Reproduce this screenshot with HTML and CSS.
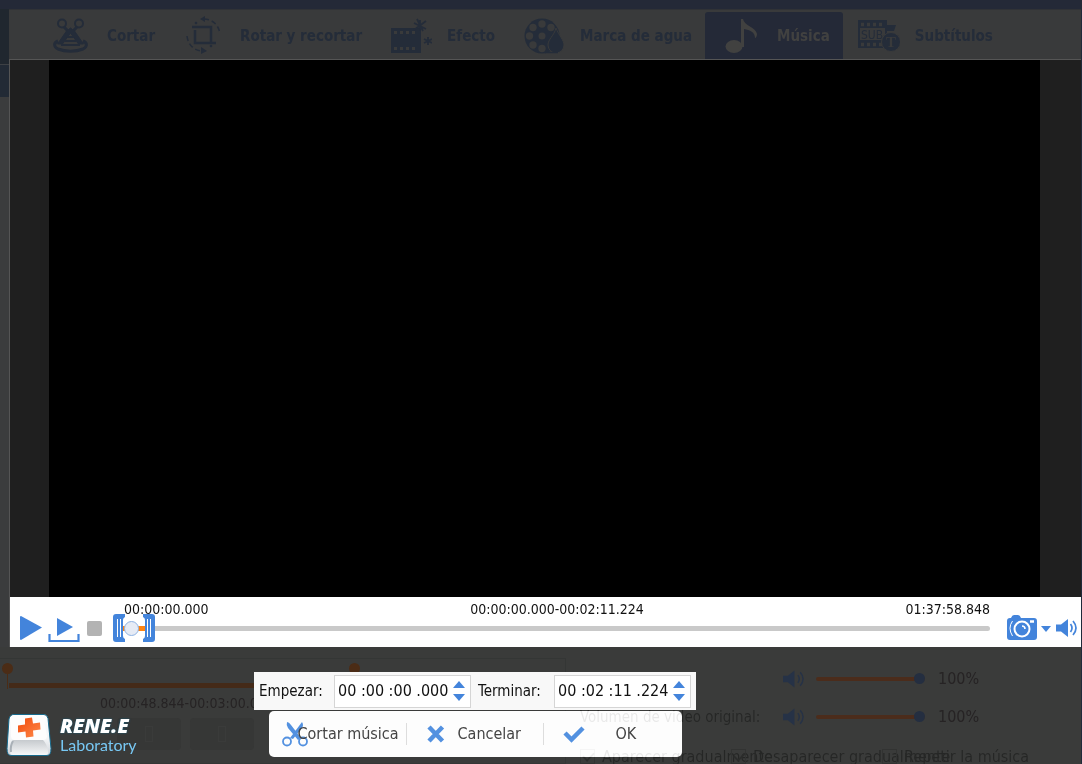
FILE: index.html
```html
<!DOCTYPE html>
<html lang="es">
<head>
<meta charset="utf-8">
<title>Cortar música</title>
<link rel="stylesheet" href="styles.css">
</head>
<body>
<div class="titlebar"></div>
<main class="workspace">
  <aside class="rail"><div class="rail-top"></div><div class="rail-item"></div></aside>
  <section class="editor">
    <nav class="tabs">
      <button class="tab"><svg class="tab-icon" viewBox="0 0 42 40" fill="none" stroke="currentColor"><g stroke-width="2"><circle cx="12" cy="7.500" r="4"/><circle cx="29" cy="7.500" r="4"/><path d="M14 11l5 5M27 11l-5 5" stroke-width="3"/></g><path d="M8 25c-5 2-4 6 0 8 7 3 18 3 25 0 4-2 5-6 0-8" stroke-width="3"/><path d="M20.500 12l4 3 9 13h-5l-8-11-8 11h-5l9-13z" fill="currentColor"/><path d="M17 21h7M15 25h11M11 29h19" stroke-width="2"/></svg>Cortar</button>
      <button class="tab"><svg class="tab-icon" viewBox="0 0 42 40" fill="none" stroke="currentColor"><path d="M9 11h19v15M12 14v13h21" stroke-width="2.500"/><path d="M21 3c8 0 15 6 16 15M4 20c1 9 7 14 14 15" stroke-width="1.500" stroke-dasharray="5 3"/><path d="M22 0v6l-5-3zM18 31v7l6-3z" fill="currentColor" stroke="none"/><circle cx="13" cy="7" r="1.300" fill="currentColor" stroke="none"/><circle cx="28" cy="30" r="1.300" fill="currentColor" stroke="none"/></svg>Rotar y recortar</button>
      <button class="tab"><svg class="tab-icon" viewBox="0 0 42 40"><path d="M1 12h30v25H1z" fill="currentColor"/><path d="M4 16.500h24M4 32.500h24" class="holes" stroke-width="3" stroke-dasharray="3 3"/><path d="M30 4v11M24 7l12 6M36 5l-12 9M27 3l6 12M38 21v8M34 23l8 4M42 23l-8 4" stroke="currentColor" stroke-width="1.800"/></svg>Efecto</button>
      <button class="tab"><svg class="tab-icon" viewBox="0 0 42 40"><circle cx="19" cy="20" r="17.500" fill="currentColor"/><g class="hole"><circle cx="19" cy="20" r="3.500"/><circle cx="19" cy="8" r="3.700"/><circle cx="10" cy="11.500" r="3.700"/><circle cx="6.500" cy="20" r="3.700"/><circle cx="10" cy="29" r="3.700"/><circle cx="19" cy="32.500" r="3.700"/><circle cx="28" cy="11.500" r="3.700"/></g><path class="drop" d="M33 12c3 8 8 12 8 17a8 8 0 0 1-16 0c0-6 6-9 8-17z" fill="currentColor"/><path d="M22 36.500h13" stroke="currentColor" stroke-width="1.500"/></svg>Marca de agua</button>
      <button class="tab active"><svg class="tab-icon" viewBox="0 0 42 40" fill="currentColor"><ellipse cx="14" cy="30.500" rx="8.500" ry="6.500"/><path d="M21 3h2c1 7 13 8 14 15 0 2-1 4-2 4 0-6-5-8-11-9v18h-3z"/></svg>Música</button>
      <button class="tab"><svg class="tab-icon" viewBox="0 0 42 40"><path d="M0 4h29v28H0z" fill="currentColor"/><path class="holes" d="M3 8.500h24M3 28.500h24" stroke-width="3.500" stroke-dasharray="3 3"/><path class="hole" d="M2 12h25v12H2z"/><text class="sub-text" x="3" y="22.500">SUB</text><path d="M29 9h9l-2 6h-7z" fill="currentColor"/><circle class="drop" cx="33" cy="26" r="9.500" fill="currentColor"/><text class="t-text" x="28" y="31">T</text></svg>Subtítulos</button>
    </nav>
    <div class="video"><div class="frame"></div></div>
    <div class="player">
      <button class="icon-btn" aria-label="Reproducir"><svg width="24" height="26" viewBox="0 0 24 26"><path d="M2 1l21 11.500L2 25q-1 0-1-1V2q0-1 1-1z" fill="currentColor"/></svg></button>
      <button class="icon-btn" aria-label="Reproducir selección"><svg width="32" height="27" viewBox="0 0 32 27"><path d="M9 3l16 9L9 21z" fill="currentColor"/><path d="M1.500 19v7h29v-7" fill="none" stroke="currentColor" stroke-width="2.200"/></svg></button>
      <button class="icon-btn stop" aria-label="Detener"></button>
      <div class="seek">
        <div class="times"><span>00:00:00.000</span><span>00:00:00.000-00:02:11.224</span><span>01:37:58.848</span></div>
        <div class="seek-track">
          <input type="range" min="0" max="5878" value="78" aria-label="Posición">
          <svg class="handle handle-start" width="13" height="28" viewBox="0 0 13 28"><path d="M3 0h9v3q-2 1-2 3v16q0 2 2 3v3H3q-3 0-3-3V3q0-3 3-3z" fill="currentColor"/><path d="M4.500 5v18M7.500 5v18" stroke="#fff"/></svg>
          <svg class="handle handle-end" width="13" height="28" viewBox="0 0 13 28"><path d="M10 0H1v3q2 1 2 3v16q0 2-2 3v3h9q3 0 3-3V3q0-3-3-3z" fill="currentColor"/><path d="M5.500 5v18M8.500 5v18" stroke="#fff"/></svg>
        </div>
      </div>
      <div class="player-tools">
        <button class="icon-btn" aria-label="Captura"><svg width="30" height="26" viewBox="0 0 30 26"><path d="M3 3h1q1-3 3-3h4q2 0 3 3h13q3 0 3 3v16q0 3-3 3H3q-3 0-3-3V6q0-3 3-3z" fill="currentColor"/><circle cx="15" cy="14" r="7.500" fill="none" stroke="#fff" stroke-width="2"/><path d="M15 11q3 0 3 3" stroke="#fff" stroke-width="1.500" fill="none"/><path d="M23 6.500h4" stroke="#fff" stroke-width="2.500"/><path d="M5.500 6q-5 7 0 15" stroke="#fff" fill="none"/></svg></button>
        <button class="icon-btn" aria-label="Opciones de captura"><svg width="12" height="8" viewBox="0 0 12 8"><path d="M1 2h10L6 8z" fill="currentColor"/></svg></button>
        <button class="icon-btn" aria-label="Volumen"><svg width="23" height="18" viewBox="0 0 23 18"><path d="M1 5.500h5L13 0v18l-7-5.500H1z" fill="currentColor"/><path d="M15.500 5q3 4 0 8M18 2q6 7 0 14" fill="none" stroke="currentColor" stroke-width="1.700"/></svg></button>
      </div>
    </div>
  </section>
</main>
<section class="panel">
  <div class="clip">
    <div class="clip-track"><i class="pin"></i><i class="pin pin-end"></i></div>
    <div class="clip-time">00:00:48.844-00:03:00.000</div>
    <div class="clip-buttons"><button aria-label="Marcar inicio"><i></i></button><button aria-label="Marcar fin"><i></i></button></div>
  </div>
  <div class="audio">
    <div class="volume">
      <span class="volume-name"></span>
      <svg width="22" height="18" viewBox="0 0 23 18"><path d="M0 5.500h5L12 0v18l-7-5.500H0z" fill="currentColor"/><path d="M15.500 5q3 4 0 8M18 2q6 7 0 14" fill="none" stroke="currentColor" stroke-width="1.500"/></svg>
      <input type="range" value="100" aria-label="Volumen de la música"><output>100%</output>
    </div>
    <div class="volume">
      <label class="volume-name ghost" for="orig">Volumen de video original:</label>
      <svg width="22" height="18" viewBox="0 0 23 18"><path d="M0 5.500h5L12 0v18l-7-5.500H0z" fill="currentColor"/><path d="M15.500 5q3 4 0 8M18 2q6 7 0 14" fill="none" stroke="currentColor" stroke-width="1.500"/></svg>
      <input type="range" value="100" id="orig"><output>100%</output>
    </div>
    <div class="options ghost">
      <label><input type="checkbox" checked>Aparecer gradualmente</label>
      <label><input type="checkbox" checked>Desaparecer gradualmente</label>
      <label><input type="checkbox">Repetir la música</label>
    </div>
  </div>
</section>
<div class="dialog">
  <div class="range-row">
    <label for="start">Empezar:</label>
    <div class="spin"><input type="text" id="start" value="00 :00 :00 .000"><div class="spin-buttons"><button aria-label="Aumentar inicio"><svg width="12" height="7" viewBox="0 0 12 7"><path d="M0 7l6-7 6 7z" fill="currentColor"/></svg></button><button aria-label="Reducir inicio"><svg width="12" height="7" viewBox="0 0 12 7"><path d="M0 0h12L6 7z" fill="currentColor"/></svg></button></div></div>
    <label for="end">Terminar:</label>
    <div class="spin"><input type="text" id="end" value="00 :02 :11 .224"><div class="spin-buttons"><button aria-label="Aumentar fin"><svg width="12" height="7" viewBox="0 0 12 7"><path d="M0 7l6-7 6 7z" fill="currentColor"/></svg></button><button aria-label="Reducir fin"><svg width="12" height="7" viewBox="0 0 12 7"><path d="M0 0h12L6 7z" fill="currentColor"/></svg></button></div></div>
  </div>
  <div class="actions">
    <button class="act-cut"><svg class="scissors" width="26" height="26" viewBox="0 0 26 26"><path d="M5 1q2 0 4 3l10 13-3 2L6 7q-2-3-1-6zM20 1q2 3 0 6l-9 11-3-1 9-12z" fill="currentColor"/><circle cx="5" cy="20.500" r="4" fill="none" stroke="currentColor" stroke-width="1.800"/><circle cx="21" cy="20.500" r="4" fill="none" stroke="currentColor" stroke-width="1.800"/></svg><span>Cortar música</span></button>
    <button class="act-cancel"><svg width="18" height="18" viewBox="0 0 18 18"><path d="M2 2l13.500 14M15.500 2L2 16" stroke="currentColor" stroke-width="4.500"/></svg><span>Cancelar</span></button>
    <button class="act-ok"><svg width="22" height="18" viewBox="0 0 22 18"><path d="M2 8l6.500 6.500L20 3" fill="none" stroke="currentColor" stroke-width="4.500"/></svg><span>OK</span></button>
  </div>
</div>
<div class="logo">
  <svg width="46" height="44" viewBox="0 0 46 44"><defs><linearGradient id="key" x2="0" y2="1"><stop offset="0" stop-color="#fff"/><stop offset=".6" stop-color="#f2f4f6"/><stop offset="1" stop-color="#cfd4da"/></linearGradient><linearGradient id="base" x2="0" y2="1"><stop offset="0" stop-color="#c6cace"/><stop offset="1" stop-color="#f6f7f8"/></linearGradient><linearGradient id="cross" x2="1" y2="1"><stop offset="0" stop-color="#f04a0c"/><stop offset="1" stop-color="#ff8a4a"/></linearGradient></defs><path d="M8 1.500h30q3 0 4 4l3 30q0 7-4 7H5q-4 0-4-7L3 6q1-4.500 5-4.500z" fill="url(#key)" stroke="#176a8c"/><path d="M7 27q-3 5-3 12 0 3 3 3h32q4 0 3-4-1-7-5-11z" fill="url(#base)"/><path d="M9 2q-4 0-4 4v17q0 4 4 4h28q4 0 4-4L38 6q0-4-4-4z" fill="#fdfdfd"/><path d="M7 28q-3 5-2 11" fill="none" stroke="#a9b0b7" stroke-width="2"/><path d="M19 5.500l7-1 1 6 7-1 .5 7-7.500 1 .5 6-7.500 1-.5-6-7.500 1v-7l7-1z" fill="url(#cross)"/></svg>
  <div class="logo-text"><b>RENE.E</b><span>Laboratory</span></div>
</div>
</body>
</html>
```
FILE: styles.css
```css
* { box-sizing: border-box; }
body {
  margin: 0; min-height: 100vh; display: flex; flex-direction: column; overflow: hidden;
  position: relative; background: #3a3b3a; color: #222;
  font: 15px/18px "DejaVu Sans Condensed", "Noto Sans", sans-serif;
}
button, input { font: inherit; color: inherit; margin: 0; }
button { border: 0; padding: 0; background: none; }
svg { display: block; flex: none; }

.titlebar { height: 9px; background: #242937; }
.workspace { flex: 1; display: flex; border-right: 1px solid #1f2a3a; }
.rail { width: 9px; background: #3b3c3d; }
.rail-top { height: 56px; background: #20272f; border-bottom: 1px solid #3d4044; }
.rail-item { height: 32px; background: #222a35; }
.editor { flex: 1; min-width: 0; display: flex; flex-direction: column; }

.tabs { height: 50px; display: flex; padding: 2px 0 0 26px; background: #393a3b; border-top: 1px solid #303236; }
.tab {
  display: flex; align-items: center; gap: 15px; padding: 0 13px 0 15px;
  color: #242c39; font-weight: bold; white-space: nowrap;
}
.tab-icon { width: 42px; height: 40px; }
.tab.active { background: #242937; color: #414140; border-radius: 3px 3px 0 0; }
.hole { fill: #393a3b; }
.holes { stroke: #393a3b; }
.drop { stroke: #393a3b; stroke-width: 1; }
.sub-text { font-size: 12px; font-weight: normal; fill: #242c39; }
.t-text { font: bold 15px "Liberation Serif", serif; fill: #393a3b; }

.video { flex: 1; display: flex; padding: 0 41px 0 39px; background: #1f1f1f; border-top: 1px solid #555; border-left: 1px solid #555; }
.frame { flex: 1; background: #000; }

.player {
  height: 50px; display: flex; align-items: center; padding: 12px 3px 0 9px;
  background: #fff; border-left: 1px solid #555; color: #4384db;
}
.icon-btn { display: flex; flex: none; color: #4384db; }
.icon-btn + .icon-btn { margin-left: 3px; }
.player > .icon-btn + .icon-btn { margin-left: 5px; }
.player > .icon-btn + .stop { margin-left: 7px; }
.stop { width: 15px; height: 15px; border-radius: 2px; background: #b3b3b3; }
.seek { flex: 1; min-width: 0; margin: -8px 17px 0 11px; align-self: flex-start; }
.times { display: flex; justify-content: space-between; padding-left: 11px; color: #111; font-size: 14px; line-height: 16px; }
.seek-track { position: relative; height: 28px; margin-top: -3px; display: flex; align-items: center; }
input[type="range"] { appearance: none; background: none; }
.seek-track input { width: 100%; height: 15px; }
.seek-track input::-webkit-slider-runnable-track { height: 5px; border-radius: 3px; background: linear-gradient(90deg, #ff8412 32px, #c9c9c9 32px); }
.seek-track input::-webkit-slider-thumb { appearance: none; width: 15px; height: 15px; margin-top: -5px; border: 1px solid #8fb3e3; border-radius: 50%; background: #e6ebf5; }
.handle { position: absolute; top: 0; }
.handle-start { left: 0; }
.handle-end { left: 29px; }
.player-tools { display: flex; align-items: center; }

.panel { display: flex; background: #3a3b3a; border-right: 1px solid #1f2a3a; color: #262324; }
.clip { width: 566px; margin-top: 11px; border: 1px solid #343635; border-left: 0; }
.clip-track { position: relative; height: 5px; margin: 24px 210px 0 9px; background: #442a18; }
.pin { position: absolute; left: -7px; bottom: 14px; width: 11px; height: 11px; border-radius: 50%; background: #4b2c16; }
.pin::after { content: ""; position: absolute; left: 5px; top: 10px; width: 1px; height: 16px; background: #4b2c16; }
.pin-end { left: auto; right: -5px; }
.clip-time { margin: 7px 0 0 100px; font-size: 14px; line-height: 16px; }
.clip-buttons { display: flex; gap: 9px; margin: 7px 0 0 117px; }
.clip-buttons button { width: 64px; height: 32px; border-radius: 4px; background: #363736; display: grid; place-items: center; }
.clip-buttons i { width: 8px; height: 16px; border: 1px solid #3a3b3a; }
.audio { flex: 1; padding: 13px 0 0 14px; }
.volume { height: 38px; display: flex; align-items: center; color: #263246; }
.volume-name { width: 203px; white-space: nowrap; }
.volume input { width: 109px; height: 12px; margin: 0 13px 0 11px; }
.volume input::-webkit-slider-runnable-track { height: 4px; background: #4b2c1b; border-radius: 2px; }
.volume input::-webkit-slider-thumb { appearance: none; width: 11px; height: 11px; margin-top: -4px; border-radius: 50%; background: #242e40; }
.volume output { color: #262324; font-size: 16px; }
.ghost { position: relative; z-index: 2; color: #151515; mix-blend-mode: difference; }
.options { display: grid; grid-template-columns: 151px 151px 1fr; align-items: end; height: 28px; font-size: 16px; line-height: 14px; white-space: nowrap; }
.options label { display: flex; align-items: center; gap: 7px; min-width: 0; }
.options input { appearance: none; flex: none; width: 15px; height: 15px; border: 1px solid #080808; }
.options input:checked::before { content: ""; display: block; width: 9px; height: 5px; margin: 2px; border: solid #101010; border-width: 0 0 2px 2px; rotate: -45deg; }

.dialog { position: absolute; z-index: 1; left: 254px; bottom: 7px; display: flex; flex-direction: column; align-items: center; gap: 1px; }
.range-row { display: flex; align-items: center; height: 38px; padding: 0 5px; background: #f8f8f8; color: #111; }
.range-row label { width: 75px; white-space: nowrap; }
.spin + label { width: 83px; padding-left: 7px; }
.spin { width: 137px; height: 33px; display: flex; align-items: center; background: #fff; border: 1px solid #d5d5d5; padding: 0 5px 0 3px; }
.spin input { flex: 1; min-width: 0; border: 0; padding: 0; background: none; outline: 0; font-size: 16px; }
.spin-buttons { display: grid; gap: 6px; }
.spin-buttons button { color: #4384db; }
.actions { display: flex; align-items: center; width: 413px; height: 46px; border-radius: 5px; background: #fdfdfd; color: #444; font-size: 16px; }
.actions button { display: flex; align-items: center; height: 22px; white-space: nowrap; }
.actions svg { color: #5391e0; }
.actions .act-cut { width: 138px; padding-left: 13px; border-right: 1px solid #ddd; }
.scissors { margin-right: -10px; }
.actions .act-cancel { width: 137px; padding-left: 20px; gap: 13px; border-right: 1px solid #ddd; }
.actions .act-ok { flex: 1; padding-left: 19px; gap: 31px; }

.logo { position: absolute; left: 6px; bottom: 7px; display: flex; align-items: center; gap: 8px; }
.logo-text { display: grid; }
.logo-text b { font: italic 800 20px/20px "Open Sans", sans-serif; color: #fff; text-shadow: 0 0 2px #168; }
.logo-text span { font: 16px/18px Lato, sans-serif; color: #78c8f4; }
```
